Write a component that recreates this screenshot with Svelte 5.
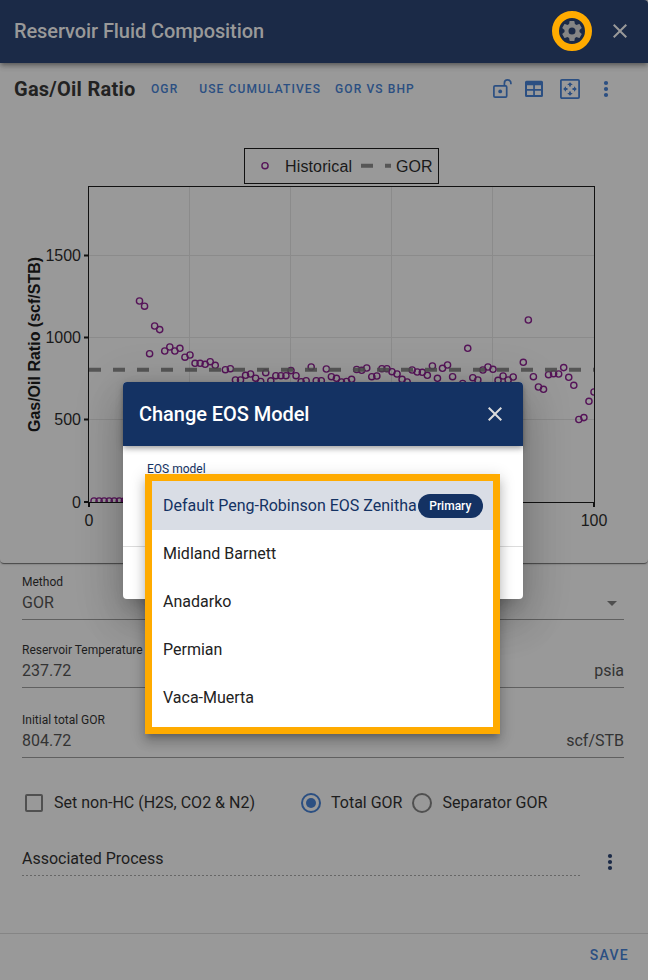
<script>
  const links = ['OGR', 'USE CUMULATIVES', 'GOR VS BHP']

  const models = [
    { name: 'Default Peng-Robinson EOS Zenitha', primary: true },
    { name: 'Midland Barnett' },
    { name: 'Anadarko' },
    { name: 'Permian' },
    { name: 'Vaca-Muerta' },
  ]

  // chart geometry, in svg units
  const left = 88.5
  const right = 594.5
  const top = 123.5
  const bottom = 439
  const step = 5.05

  const yTicks = [
    { value: 1500, y: 192.5 },
    { value: 1000, y: 274.5 },
    { value: 500, y: 356.5 },
    { value: 0, y: 439 },
  ]
  const gridX = [189.5, 290.5, 391.5, 492.5]

  const readings = [
    438, 438, 438, 438, 438, 438, 438, 438, 438, 238,
    243.2, 290.7, 263, 266.6, 288, 284, 288, 285.3, 294.2, 292,
    300.3, 300.3, 301.3, 298.7, 302.3, null, 306.7, 305.7, 317, 317,
    312.3, 311, 315.2, 318.5, 309.7, 317.8, 312.7, 312.7, 312.7, 307.6,
    312.7, 318.7, 317.7, 304, 317.7, 317.7, 306, 313.7, 315.3, 319,
    318.5, 316.3, 306.5, 307.3, 305, 313.7, 313, 305.7, 305.7, 308.7,
    311, 316.4, 319, 307, 309, 309.3, 312.3, 303, 315.3, 305.3,
    302, 313.7, null, 320.5, 285.3, 314.7, 317, 307, 304, 306.3,
    317.3, 313, 317, 314, null, 299.3, 257, 313.7, 324, 326.3,
    311.7, 310.7, 311, 304.6, 314.3, 322.3, 356.5, 354.6, 338.3, 329,
  ]
  const points = readings
    .map((y, i) => ({ x: 89 + (i + 1) * step, y }))
    .filter((p) => p.y !== null)

  let selected = models[0].name
  let ratioType = 'total'
</script>

<div class="page">
  <header class="toolbar">
    <h1>Reservoir Fluid Composition</h1>
    <button class="settings" aria-label="Settings">
      <svg width="24" height="24" viewBox="0 0 24 24">
        <path fill="currentColor" d="M12 15.5A3.5 3.5 0 0 1 8.5 12 3.5 3.5 0 0 1 12 8.5a3.5 3.5 0 0 1 3.5 3.5 3.5 3.5 0 0 1-3.5 3.5m7.43-2.53c.04-.32.07-.64.07-.97s-.03-.66-.07-1l2.11-1.63c.19-.15.24-.42.12-.64l-2-3.46c-.12-.22-.39-.31-.61-.22l-2.49 1c-.52-.39-1.06-.73-1.69-.98l-.37-2.65A.506.506 0 0 0 14 2h-4c-.25 0-.46.18-.5.42l-.37 2.65c-.63.25-1.17.59-1.69.98l-2.49-1c-.22-.09-.49 0-.61.22l-2 3.46c-.13.22-.07.49.12.64L4.57 11c-.04.34-.07.67-.07 1s.03.65.07.97l-2.11 1.66c-.19.15-.25.42-.12.64l2 3.46c.12.22.39.3.61.22l2.49-1.01c.52.4 1.06.74 1.69.99l.37 2.65c.04.24.25.42.5.42h4c.25 0 .46-.18.5-.42l.37-2.65c.63-.26 1.17-.59 1.69-.99l2.49 1.01c.22.08.49 0 .61-.22l2-3.46c.12-.22.07-.49-.12-.64z" />
      </svg>
    </button>
    <button class="icon close" aria-label="Close">
      <svg width="24" height="24" viewBox="0 0 24 24">
        <path fill="currentColor" d="M19 6.41 17.59 5 12 10.59 6.41 5 5 6.41 10.59 12 5 17.59 6.41 19 12 13.41 17.59 19 19 17.59 13.41 12z" />
      </svg>
    </button>
  </header>

  <section class="card">
    <div class="card-head">
      <h2>Gas/Oil Ratio</h2>
      <nav class="links">
        {#each links as link}
          <button class="link">{link}</button>
        {/each}
      </nav>
      <div class="tools">
        <svg width="24" height="24" viewBox="0 0 24 24" fill="none" stroke="currentColor" stroke-width="1.7">
          <rect x="3.9" y="8.9" width="12.8" height="11.2" rx="1.2" />
          <path d="M14.4 8.6V6.200a3.250 3.250 0 0 1 6.500 0v1" />
          <circle cx="10.200" cy="14.400" r="1.900" fill="currentColor" stroke="none" />
        </svg>
        <svg width="24" height="24" viewBox="0 0 24 24">
          <path fill="currentColor" fill-rule="evenodd" d="M4.500 3.700h15a1.500 1.500 0 0 1 1.500 1.500v13.300a1.500 1.500 0 0 1-1.500 1.500h-15a1.500 1.500 0 0 1-1.500-1.500V5.200a1.500 1.500 0 0 1 1.500-1.500M5 8.300v3.700h6.200V8.300zm7.900 0v3.700H19V8.300zM5 13.800v4.200h6.200v-4.200zm7.900 0v4.200H19v-4.200z" />
        </svg>
        <svg class="fit" width="24" height="24" viewBox="0 0 24 24">
          <rect x="2.900" y="2.900" width="18.200" height="18.200" rx="1" fill="none" stroke="currentColor" stroke-width="1.800" />
          <path fill="currentColor" d="m12 5.200 2.800 2.800h-1.900v1.500h-1.800V8H9.200zM12 18.800 9.200 16h1.900v-1.500h1.800V16h1.900zM5.200 12 8 9.200v1.900h1.500v1.800H8v1.900zM18.800 12 16 14.800v-1.900h-1.500v-1.800H16V9.200z" />
        </svg>
        <svg class="more" width="24" height="24" viewBox="0 0 24 24" fill="currentColor">
          <circle cx="12" cy="6" r="2.1" /><circle cx="12" cy="12" r="2.1" /><circle cx="12" cy="18" r="2.1" />
        </svg>
      </div>
    </div>

    <svg class="chart" width="648" height="448" viewBox="0 52 648 448">
      <defs>
        <clipPath id="plot"><rect x="89" y="124" width="505.500" height="315" /></clipPath>
      </defs>

      <rect class="frame" x="244.500" y="85.500" width="194" height="35" />
      <circle class="point" cx="265" cy="102.700" r="3.100" />
      <text x="285" y="109" textLength="67">Historical</text>
      <path class="gor" d="M361 102.700H391" />
      <text x="396" y="109">GOR</text>

      {#each gridX as x}
        <line class="grid" x1={x} x2={x} y1={top} y2={bottom} />
      {/each}
      {#each yTicks.slice(0, 3) as tick}
        <line class="grid" x1={left} x2={right} y1={tick.y} y2={tick.y} />
      {/each}

      <g clip-path="url(#plot)">
        {#each points as p}
          <circle class="point" cx={p.x} cy={p.y} r="3.100" />
        {/each}
        <line class="gor" x1="89" x2="595" y1="306.700" y2="306.700" />
      </g>

      <rect class="frame" x={left} y={top} width={right - left} height={bottom - top + 0.5} />
      {#each yTicks as tick}
        <line class="tick" x1="84" x2="89" y1={tick.y} y2={tick.y} />
        <text text-anchor="end" x="81" y={tick.y + 5.500}>{tick.value}</text>
      {/each}
      <line class="tick" x1="89" x2="89" y1="439" y2="444" />
      <line class="tick" x1="594" x2="594" y1="439" y2="444" />
      <text text-anchor="middle" x="89" y="463">0</text>
      <text text-anchor="middle" x="594" y="463">100</text>
      <text class="axis-title" text-anchor="middle" transform="translate(40 281.500) rotate(-90)">Gas/Oil Ratio (scf/STB)</text>
    </svg>
  </section>

  <section class="form">
    <div class="field">
      <span class="label">Method</span>
      <div class="value">GOR <i class="caret"></i></div>
    </div>
    <div class="field">
      <span class="label">Reservoir Temperature</span>
      <div class="value">237.72 <span>psia</span></div>
    </div>
    <div class="field">
      <span class="label">Initial total GOR</span>
      <div class="value">804.72 <span>scf/STB</span></div>
    </div>

    <div class="options">
      <span class="checkbox"></span>
      <span class="non-hc">Set non-HC (H2S, CO2 &amp; N2)</span>
      <span class="radio" class:checked={ratioType === 'total'}></span>
      <span class="total">Total GOR</span>
      <span class="radio" class:checked={ratioType === 'separator'}></span>
      <span>Separator GOR</span>
    </div>

    <div class="process">
      <div class="process-name">Associated Process</div>
      <svg class="more" width="24" height="24" viewBox="0 0 24 24" fill="currentColor">
        <circle cx="12" cy="6" r="2.100" /><circle cx="12" cy="12" r="2.100" /><circle cx="12" cy="18" r="2.100" />
      </svg>
    </div>
  </section>

  <footer class="actions">
    <button class="save">SAVE</button>
  </footer>

  <div class="dialog" role="dialog" aria-label="Change EOS Model">
    <div class="dialog-head">
      <h3>Change EOS Model</h3>
      <button class="icon" aria-label="Close dialog">
        <svg width="24" height="24" viewBox="0 0 24 24">
          <path fill="currentColor" d="M19 6.41 17.59 5 12 10.59 6.41 5 5 6.41 10.59 12 5 17.59 6.41 19 12 13.41 17.59 19 19 17.59 13.41 12z" />
        </svg>
      </button>
    </div>
    <div class="dialog-body">EOS model</div>
  </div>

  <div class="menu" role="listbox">
    {#each models as model}
      <div class="item" class:selected={model.name === selected}>
        {model.name}
        {#if model.primary}<span class="chip">Primary</span>{/if}
      </div>
    {/each}
  </div>
</div>

<style>
  :global(body) {
    margin: 0;
    background: #999;
  }
  .page {
    position: relative;
    display: flex;
    flex-direction: column;
    width: 648px;
    height: 980px;
    overflow: hidden;
    background: #999;
    color: #1d1d1d;
    font: 16px/20px Roboto, sans-serif;
  }
  .page * {
    box-sizing: border-box;
  }
  h1, h2, h3 {
    margin: 0;
    font-weight: 500;
    font-size: 20px;
    line-height: 24px;
  }
  button {
    padding: 0;
    border: 0;
    background: none;
    color: inherit;
    font: inherit;
    letter-spacing: inherit;
  }
  svg {
    display: block;
    flex: none;
  }

  .toolbar {
    z-index: 1;
    display: flex;
    align-items: center;
    flex: none;
    height: 63px;
    padding: 0 16px 0 14px;
    border-radius: 0 4px 0 0;
    background: #1b2a47;
    color: #999;
    box-shadow: 0 2px 4px -1px rgba(0, 0, 0, 0.3), 0 4px 5px rgba(0, 0, 0, 0.14), 0 1px 10px rgba(0, 0, 0, 0.12);
  }
  .toolbar h1 {
    flex: 1;
    margin-top: -1px;
    letter-spacing: -0.09px;
  }
  .settings {
    display: grid;
    place-items: center;
    width: 40px;
    height: 40px;
    margin: -2px 16px 0 0;
    border: 7px solid #ffab00;
    border-radius: 50%;
    color: #858585;
  }
  .icon.close {
    margin-top: -1px;
    color: #999;
  }

  .card {
    flex: none;
    height: 500px;
    border-radius: 0 0 4px 4px;
    box-shadow: 0 2px 1px -1px rgba(0, 0, 0, 0.3), 0 1px 1px rgba(0, 0, 0, 0.24), 0 1px 3px rgba(0, 0, 0, 0.14);
  }
  .card-head {
    display: flex;
    align-items: center;
    height: 52px;
    padding: 0 30px 0 14px;
  }
  .card-head h2 {
    width: 137px;
    font-weight: 700;
    letter-spacing: 0.25px;
    color: #222;
  }
  .links {
    display: flex;
    flex: 1;
    color: #2b4f82;
    font-size: 12px;
    font-weight: 500;
    letter-spacing: 1.1px;
  }
  .link {
    margin-right: 14px;
    white-space: nowrap;
  }
  .link:first-child {
    margin-right: 21px;
  }
  .tools {
    display: flex;
    gap: 8px;
    color: #2b4f82;
  }
  .tools .fit {
    margin: 0 4px;
  }
  .chart text {
    fill: #1a1a1a;
    font: 16px "Liberation Sans", Arial, sans-serif;
  }
  .chart .axis-title {
    font-size: 16px;
    font-weight: 700;
    fill: #111;
  }
  .frame {
    fill: none;
    stroke: #111;
  }
  .grid {
    stroke: #8b8b8b;
  }
  .tick {
    stroke: #111;
    stroke-width: 2;
  }
  .point {
    fill: none;
    stroke: #561459;
    stroke-width: 1.4;
  }
  .gor {
    stroke: #4c4c4c;
    stroke-opacity: 0.88;
    stroke-width: 4;
    stroke-dasharray: 12 12;
  }

  .form {
    flex: 1;
    padding: 9px 24px 0 22px;
  }
  .field {
    height: 48px;
    margin-bottom: 20px;
    border-bottom: 1px solid #606060;
  }
  .field + .field {
    margin-bottom: 22px;
  }
  .label {
    display: block;
    height: 20px;
    font-size: 12px;
  }
  .value {
    display: flex;
    justify-content: space-between;
    line-height: 21px;
    color: #333;
  }
  .caret {
    height: 0;
    margin: 9px 7px 0 0;
    border: 5px solid transparent;
    border-top-color: #4e4e4e;
    border-bottom: 0;
  }
  .options {
    display: flex;
    align-items: center;
    height: 24px;
    margin-top: 33px;
    padding-left: 3px;
  }
  .checkbox {
    width: 18px;
    height: 18px;
    border: 2px solid #505050;
    border-radius: 2px;
  }
  .non-hc {
    width: 258px;
    padding-left: 11px;
  }
  .radio {
    display: grid;
    place-items: center;
    width: 20px;
    height: 20px;
    margin-right: 10px;
    border: 2px solid #505050;
    border-radius: 50%;
  }
  .radio.checked {
    border-color: #2b4f82;
  }
  .radio.checked::after {
    content: '';
    width: 10px;
    height: 10px;
    border-radius: 50%;
    background: #2b4f82;
  }
  .total {
    margin-right: 10px;
  }
  .process {
    display: flex;
    justify-content: space-between;
    align-items: flex-start;
    margin-top: 34px;
    padding-right: 2px;
    color: #1b2a47;
  }
  .process-name {
    width: 558px;
    height: 27px;
    background: repeating-linear-gradient(90deg, #666 0 2px, transparent 2px 4px) bottom / 100% 1px no-repeat;
    color: #1d1d1d;
  }
  .process .more {
    margin-top: 1px;
  }
  .actions {
    display: flex;
    justify-content: flex-end;
    align-items: center;
    height: 47px;
    padding: 0 19px 4px 0;
    border-top: 1px solid #858585;
    color: #2b4f82;
    font-size: 14px;
    font-weight: 500;
    letter-spacing: 1.25px;
  }

  .dialog {
    position: absolute;
    z-index: 2;
    left: 123px;
    top: 382px;
    width: 400px;
    height: 217px;
    border-radius: 4px;
    background: #fff;
    box-shadow: 0 11px 15px -7px rgba(0, 0, 0, 0.2), 0 24px 38px 3px rgba(0, 0, 0, 0.14), 0 9px 46px 8px rgba(0, 0, 0, 0.12);
  }
  .dialog-head {
    display: flex;
    justify-content: space-between;
    align-items: center;
    height: 64px;
    padding: 0 16px;
    border-radius: 4px 4px 0 0;
    background: #143263;
    color: #fff;
    box-shadow: 0 2px 4px -1px rgba(0, 0, 0, 0.2), 0 4px 5px rgba(0, 0, 0, 0.14), 0 1px 10px rgba(0, 0, 0, 0.12);
  }
  .dialog-head h3 {
    letter-spacing: -0.05px;
  }
  .dialog-head .icon {
    color: #dcdcdc;
  }
  .dialog-body {
    height: 101px;
    padding: 13px 24px;
    border-bottom: 1px solid #dcdcdc;
    color: #143263;
    font-size: 12px;
  }
  .menu {
    position: absolute;
    z-index: 3;
    left: 145px;
    top: 474px;
    width: 355px;
    height: 260px;
    border: 7px solid #ffab00;
    background: #fff;
    color: #222;
    box-shadow: 0 5px 5px -3px rgba(0, 0, 0, 0.2), 0 8px 10px 1px rgba(0, 0, 0, 0.14), 0 3px 14px 2px rgba(0, 0, 0, 0.12);
  }
  .item {
    display: flex;
    align-items: center;
    height: 48px;
    padding: 0 10px 0 11px;
    white-space: nowrap;
  }
  .item.selected {
    height: 49px;
    background: #d9dde5;
    color: #143263;
  }
  .chip {
    margin-left: 1px;
    padding: 0 11.5px;
    border-radius: 12px;
    background: #143263;
    color: #fff;
    font-size: 12px;
    font-weight: 500;
    line-height: 24px;
  }
</style>
